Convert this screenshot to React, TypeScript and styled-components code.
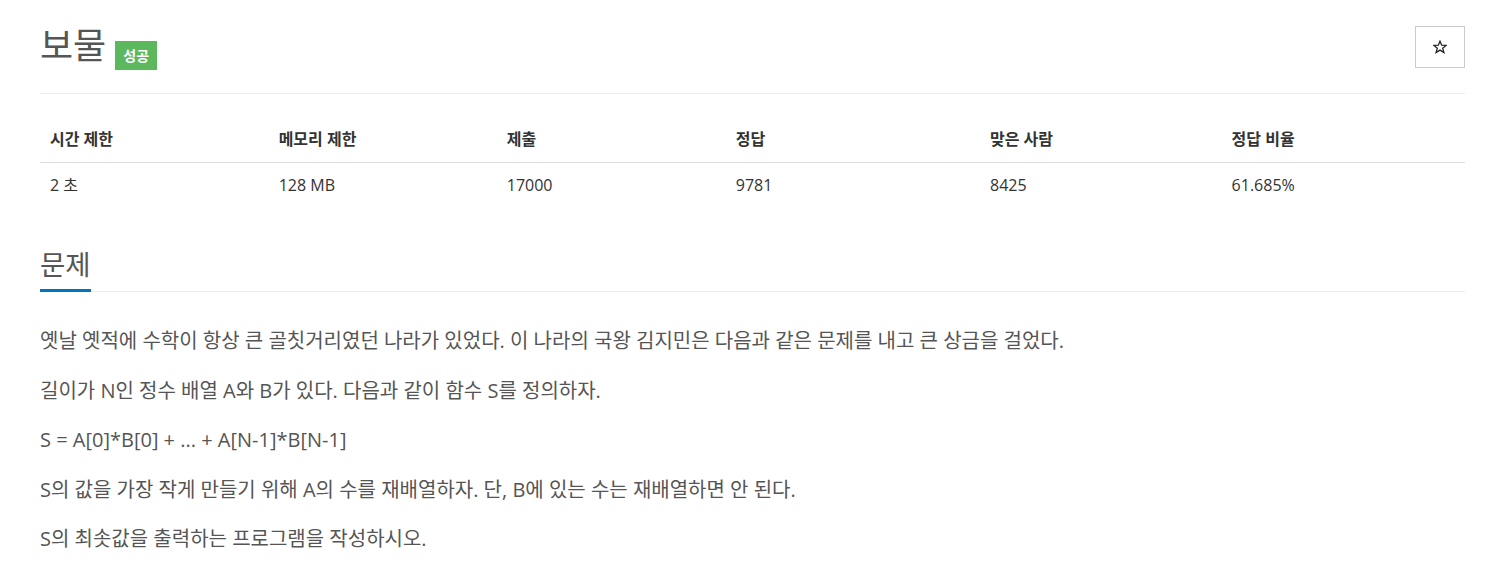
import styled, { createGlobalStyle } from "styled-components";

const GlobalStyle = createGlobalStyle`
  body {
    margin: 0;
    background: #fff;
    font-family: "Open Sans", "Noto Sans CJK KR", sans-serif;
    color: #333;
  }
`;

const Page = styled.div`
  padding: 0 39px 0 40px;
`;

const Header = styled.div`
  display: flex;
  align-items: flex-start;
  justify-content: space-between;
  padding-top: 26px;
  height: 67px;
  border-bottom: 1px solid #eee;
`;

const TitleWrap = styled.div`
  display: flex;
  align-items: flex-start;
  gap: 9px;
`;

const Title = styled.h1`
  margin: 0;
  margin-top: -2px;
  font-size: 36px;
  font-weight: 400;
  line-height: 44px;
  color: #555;
`;

const Badge = styled.span<{ $color: string }>`
  display: inline-block;
  margin-top: 15px;
  padding: 0 8px;
  height: 29px;
  line-height: 29px;
  font-size: 14px;
  font-weight: 700;
  color: #fff;
  background: ${({ $color }) => $color};
`;

const StarButton = styled.button`
  width: 50px;
  height: 42px;
  border: 1px solid #ccc;
  background: #fff;
  padding: 0;
  display: flex;
  align-items: center;
  justify-content: center;
`;

const Table = styled.table`
  width: 100%;
  margin-top: 22px;
  border-collapse: collapse;
  color: #333;
`;

const Th = styled.th<{ $w: number }>`
  width: ${({ $w }) => $w}px;
  text-align: left;
  font-size: 16px;
  font-weight: 700;
  padding: 12px 10px;
  line-height: 22px;
  border-bottom: 1px solid #ddd;
`;

const Td = styled.td`
  font-size: 16px;
  padding: 11px 10px;
  line-height: 22px;
`;

const Section = styled.section`
  margin-top: 38px;
`;

const SectionHead = styled.div`
  border-bottom: 1px solid #eee;
`;

const SectionTitle = styled.h2`
  display: inline-block;
  margin: 0 0 -1px;
  font-size: 27.5px;
  font-weight: 400;
  line-height: 40px;
  color: #555;
  padding-bottom: 4px;
  border-bottom: 3px solid #0076c0;
`;

const Body = styled.div`
  padding-top: 34px;
  font-size: 20px;
  color: #555;
`;

const P = styled.p`
  margin: 0 0 19.5px;
  line-height: 30px;
`;

const stats = [
  { label: "시간 제한", value: "2 초", w: 230 },
  { label: "메모리 제한", value: "128 MB", w: 228 },
  { label: "제출", value: "17000", w: 227 },
  { label: "정답", value: "9781", w: 256 },
  { label: "맞은 사람", value: "8425", w: 242 },
  { label: "정답 비율", value: "61.685%", w: 241 },
];

const lines = [
  "옛날 옛적에 수학이 항상 큰 골칫거리였던 나라가 있었다. 이 나라의 국왕 김지민은 다음과 같은 문제를 내고 큰 상금을 걸었다.",
  "길이가 N인 정수 배열 A와 B가 있다. 다음과 같이 함수 S를 정의하자.",
  "S = A[0]*B[0] + ... + A[N-1]*B[N-1]",
  "S의 값을 가장 작게 만들기 위해 A의 수를 재배열하자. 단, B에 있는 수는 재배열하면 안 된다.",
  "S의 최솟값을 출력하는 프로그램을 작성하시오.",
];

export default function App() {
  return (
    <>
      <GlobalStyle />
      <Page>
        <Header>
          <TitleWrap>
            <Title>보물</Title>
            <Badge $color="#5cb85c">성공</Badge>
          </TitleWrap>
          <StarButton aria-label="즐겨찾기">
            <svg width="14" height="14" viewBox="0 0 24 24" fill="none" stroke="#222" strokeWidth="2.2" strokeLinejoin="miter">
              <polygon points="12,2 14.9,9 22.5,9.3 16.6,14.1 18.7,21.5 12,17.3 5.3,21.5 7.4,14.1 1.5,9.3 9.1,9" />
            </svg>
          </StarButton>
        </Header>
        <Table>
          <thead>
            <tr>
              {stats.map((s) => (
                <Th key={s.label} $w={s.w}>
                  {s.label}
                </Th>
              ))}
            </tr>
          </thead>
          <tbody>
            <tr>
              {stats.map((s) => (
                <Td key={s.label}>{s.value}</Td>
              ))}
            </tr>
          </tbody>
        </Table>
        <Section>
          <SectionHead>
            <SectionTitle>문제</SectionTitle>
          </SectionHead>
          <Body>
            {lines.map((l) => (
              <P key={l}>{l}</P>
            ))}
          </Body>
        </Section>
      </Page>
    </>
  );
}
